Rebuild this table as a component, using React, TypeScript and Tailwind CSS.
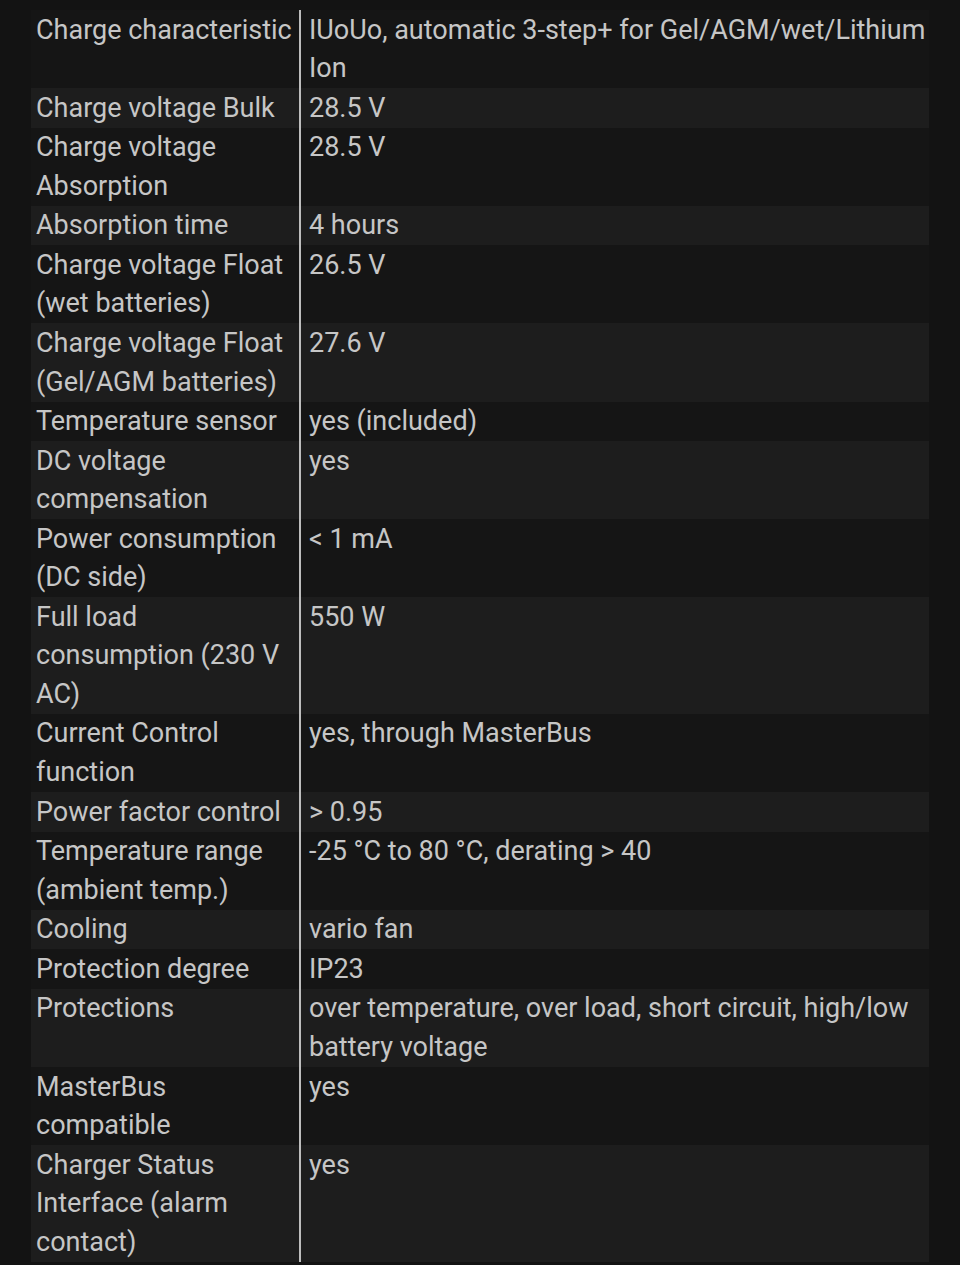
const specs: [string, string][] = [
  ['Charge characteristic', 'IUoUo, automatic 3-step+ for Gel/AGM/wet/Lithium Ion'],
  ['Charge voltage Bulk', '28.5 V'],
  ['Charge voltage Absorption', '28.5 V'],
  ['Absorption time', '4 hours'],
  ['Charge voltage Float (wet batteries)', '26.5 V'],
  ['Charge voltage Float (Gel/AGM batteries)', '27.6 V'],
  ['Temperature sensor', 'yes (included)'],
  ['DC voltage compensation', 'yes'],
  ['Power consumption (DC side)', '< 1 mA'],
  ['Full load consumption (230 V AC)', '550 W'],
  ['Current Control function', 'yes, through MasterBus'],
  ['Power factor control', '> 0.95'],
  ['Temperature range (ambient temp.)', '-25 °C to 80 °C, derating > 40'],
  ['Cooling', 'vario fan'],
  ['Protection degree', 'IP23'],
  ['Protections', 'over temperature, over load, short circuit, high/low battery voltage'],
  ['MasterBus compatible', 'yes'],
  ['Charger Status Interface (alarm contact)', 'yes'],
];

export default function App() {
  return (
    <div className="min-h-[1265px] w-[960px] bg-[#131313] pt-[10px] font-['Roboto',sans-serif]">
      <div className="ml-[31px] w-[898px]">
        <table className="w-full border-collapse text-[27px] leading-[38.5px] text-[#c6c6c6]">
          <tbody>
            {specs.map(([label, value], i) => (
              <tr key={label} className={i % 2 === 0 ? 'bg-[#151515]' : 'bg-[#1d1d1d]'}>
                <td className="w-[269px] py-[0.55px] pl-[5px] pr-[4px] align-top">{label}</td>
                <td className="border-l-2 border-[#bdbdbd] py-[0.55px] pl-[8px] pr-[2px] align-top">{value}</td>
              </tr>
            ))}
          </tbody>
        </table>
      </div>
    </div>
  );
}
